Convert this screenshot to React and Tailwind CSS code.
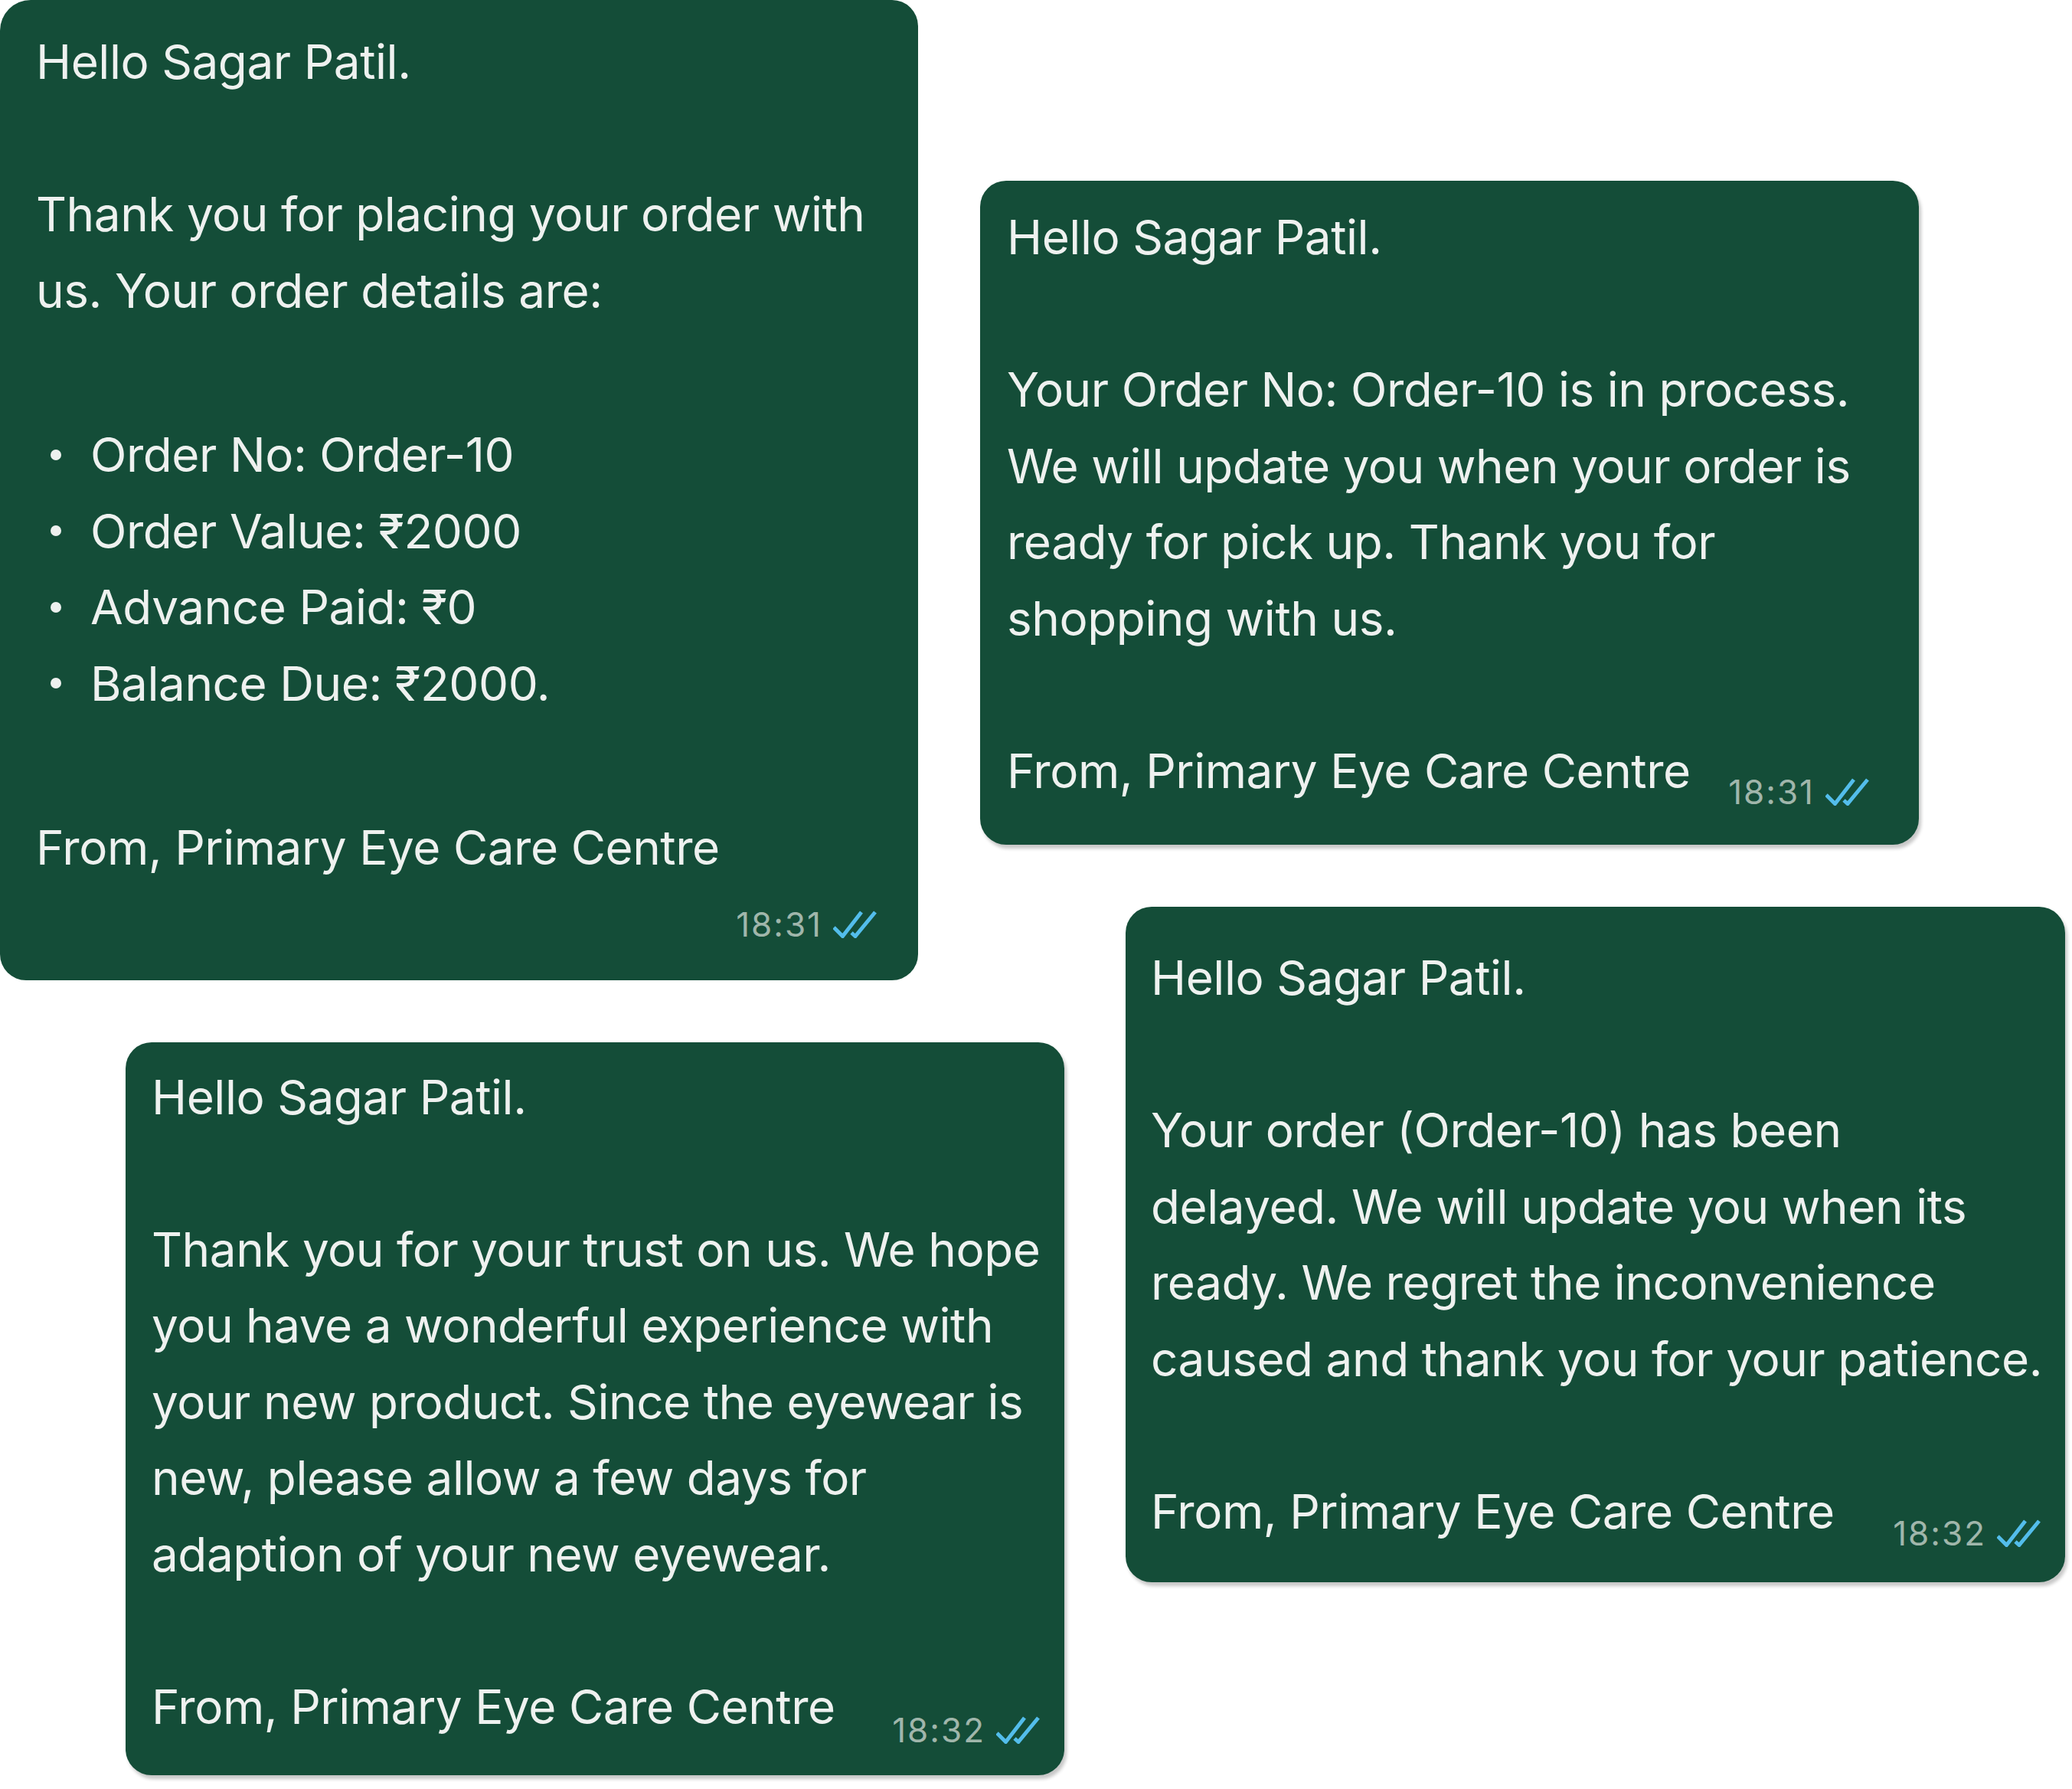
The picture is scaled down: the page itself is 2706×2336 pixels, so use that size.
import React from "react";

const FONT = { fontFamily: "Inter, 'Noto Sans', sans-serif" };

function Checks() {
  return (
    <svg width="57" height="36" viewBox="0 0 57 36" fill="none" stroke="#53bdeb" strokeWidth="5" strokeLinecap="butt" strokeLinejoin="miter">
      <path d="M1 22 L12.5 33.5 L37 2" />
      <path d="M24 29 L29 33.5 L55 2" />
    </svg>
  );
}

function Meta({ time }) {
  return (
    <div className="flex items-center gap-[14px] shrink-0">
      <span className="text-[44px] text-[#a0b6ab] tracking-[2px]">{time}</span>
      <Checks />
    </div>
  );
}

function Line({ children }) {
  return <div className="whitespace-nowrap h-[99.5px] leading-[99.5px]">{children}</div>;
}

function Blank() {
  return <div className="h-[99.5px]" />;
}

function Bubble({ className, children }) {
  return (
    <div className={`bg-[#144d38] text-[#eef1ef] text-[62px] tracking-[-0.45px] rounded-[34px] shrink-0 ${className}`}>
      {children}
    </div>
  );
}

export default function App() {
  return (
    <div className="w-[2706px] h-[2336px] bg-white overflow-hidden flex" style={FONT}>
      {/* left column */}
      <div className="w-[1280px] shrink-0 flex flex-col">
        <Bubble className="w-[1199px] pl-[47px] pr-[54px] pt-[31px] pb-[23px] rounded-tl-[40px]">
          <Line>Hello Sagar Patil.</Line>
          <Blank />
          <Line>Thank you for placing your order with</Line>
          <Line>us. Your order details are:</Line>
          <Blank />
          <ul className="my-[15.5px]">
            {["Order No: Order-10", "Order Value: ₹2000", "Advance Paid: ₹0", "Balance Due: ₹2000."].map((t) => (
              <li key={t} className="flex items-center h-[99.5px] whitespace-nowrap">
                <span className="w-[14px] h-[14px] rounded-full bg-[#eef1ef] ml-[19px] mr-[38px]" />
                <span>{t}</span>
              </li>
            ))}
          </ul>
          <Blank />
          <Line>From, Primary Eye Care Centre</Line>
          <div className="h-[100px] flex items-center justify-end">
            <Meta time="18:31" />
          </div>
        </Bubble>

        <Bubble className="w-[1226px] ml-[164px] mt-[81px] pl-[34px] pr-[32px] pt-[22px] pb-[40px] shadow-[3px_5px_4px_rgba(0,0,0,0.22)]">
          <Line>Hello Sagar Patil.</Line>
          <Blank />
          <Line>Thank you for your trust on us. We hope</Line>
          <Line>you have a wonderful experience with</Line>
          <Line>your new product. Since the eyewear is</Line>
          <Line>new, please allow a few days for</Line>
          <Line>adaption of your new eyewear.</Line>
          <Blank />
          <div className="flex items-end justify-between">
            <Line>From, Primary Eye Care Centre</Line>
            <div className="h-[38px] flex items-center">
              <Meta time="18:32" />
            </div>
          </div>
        </Bubble>
      </div>

      {/* right column */}
      <div className="flex-1 flex flex-col">
        <Bubble className="w-[1226px] mt-[236px] pl-[35px] pr-[65px] pt-[24px] pb-[47px] shadow-[3px_5px_4px_rgba(0,0,0,0.22)]">
          <Line>Hello Sagar Patil.</Line>
          <Blank />
          <Line>Your Order No: Order-10 is in process.</Line>
          <Line>We will update you when your order is</Line>
          <Line>ready for pick up. Thank you for</Line>
          <Line>shopping with us.</Line>
          <Blank />
          <div className="flex items-end justify-between">
            <Line>From, Primary Eye Care Centre</Line>
            <div className="h-[44px] flex items-center">
              <Meta time="18:31" />
            </div>
          </div>
        </Bubble>

        <Bubble className="w-[1227px] ml-[190px] mt-[81px] pl-[33px] pr-[32px] pt-[43px] pb-[43px] shadow-[3px_5px_4px_rgba(0,0,0,0.22)]">
          <Line>Hello Sagar Patil.</Line>
          <Blank />
          <Line>Your order (Order-10) has been</Line>
          <Line>delayed. We will update you when its</Line>
          <Line>ready. We regret the inconvenience</Line>
          <Line>caused and thank you for your patience.</Line>
          <Blank />
          <div className="flex items-end justify-between">
            <Line>From, Primary Eye Care Centre</Line>
            <div className="h-[42px] flex items-center">
              <Meta time="18:32" />
            </div>
          </div>
        </Bubble>
      </div>
    </div>
  );
}
